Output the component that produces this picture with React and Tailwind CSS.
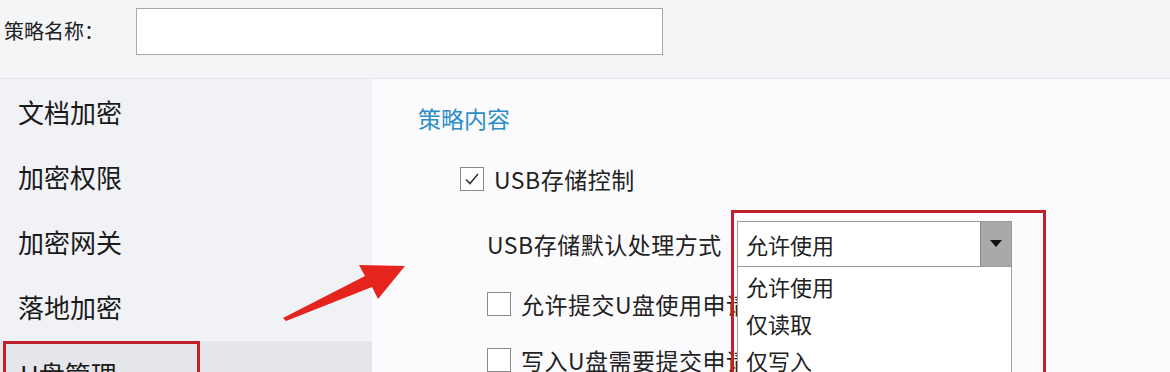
import React from 'react'

const font = { fontFamily: '"Noto Sans CJK SC", "Noto Sans", sans-serif' }

function CheckBox({ checked }) {
  return (
    <span className="w-[24px] h-[24px] border border-[#8a8a8a] bg-white flex items-center justify-center shrink-0">
      {checked && (
        <svg width="16" height="14" viewBox="0 0 16 14">
          <path d="M2 7.5 L6 11.5 L14 2" fill="none" stroke="#333" strokeWidth="1.6" />
        </svg>
      )}
    </span>
  )
}

function SideItem({ label, active }) {
  if (active) {
    return (
      <div className="h-[66px] shrink-0 mt-[2px] bg-[#e5e6e9]">
        <div className="w-[197px] h-full ml-[3px] border-[3px] border-[#c0202a] pl-[14px] pt-[12px]">
          <span className="text-[26px] text-[#1a1a1a] leading-[36px]">{label}</span>
        </div>
      </div>
    )
  }
  return (
    <div className="h-[65px] shrink-0 flex items-center pl-[18px]">
      <span className="text-[26px] text-[#1a1a1a]">{label}</span>
    </div>
  )
}

export default function App() {
  return (
    <main className="w-[1170px] h-[372px] overflow-hidden bg-[#fbfbfd] relative" style={font}>
      {/* barre du nom */}
      <div className="h-[79px] bg-[#f4f5f7] border-b border-[#e3e4e7] flex items-start pt-[8px]">
        <span className="w-[136px] h-[45px] pl-[4px] flex items-center text-[20px] text-[#222]">策略名称：</span>
        <div className="w-[527px] h-[47px] bg-white border border-[#a9a9a9]"></div>
      </div>

      <div className="flex h-[293px]">
        {/* menu gauche */}
        <div className="w-[372px] shrink-0 bg-[#f1f2f6] flex flex-col">
          <SideItem label="文档加密" />
          <SideItem label="加密权限" />
          <SideItem label="加密网关" />
          <SideItem label="落地加密" />
          <SideItem label="U盘管理" active />
        </div>

        {/* contenu */}
        <div className="flex-1 pl-[46px] pt-[22px] flex flex-col">
          <h2 className="text-[23px] text-[#2d8ec6] leading-[34px]">策略内容</h2>

          <div className="flex items-center gap-[10px] ml-[42px] mt-[29px] h-[30px] shrink-0">
            <CheckBox checked />
            <span className="text-[23px] tracking-[0.5px] text-[#222]">USB存储控制</span>
          </div>

          <div className="flex items-center ml-[69px] mt-[27px] h-[46px] shrink-0">
            <span className="text-[23px] tracking-[0.5px] text-[#222] w-[250px]">USB存储默认处理方式</span>
            <div className="relative w-[275px] h-[46px]">
              <div className="absolute top-[-11px] left-[-6px] w-[315px] h-[200px] border-[3px] border-[#c0202a] pl-[3px] pt-[8px] z-10">
                <div className="w-[275px] h-[46px] bg-white border border-[#9a9a9a] flex">
                  <span className="flex-1 flex items-center pl-[8px] text-[22px] text-[#222]">允许使用</span>
                  <span className="w-[31px] bg-[#a9a9a9] border-l border-[#8a8a8a] flex items-center justify-center">
                    <svg width="12" height="8" viewBox="0 0 12 8">
                      <path d="M0 0 H12 L6 7 Z" fill="#111" />
                    </svg>
                  </span>
                </div>
                <div className="w-[275px] h-[140px] bg-white border border-t-0 border-[#a0a0a0] pl-[8px] pt-[1px] flex flex-col">
                  <span className="h-[37px] text-[22px] text-[#222] leading-[37px]">允许使用</span>
                  <span className="h-[37px] text-[22px] text-[#222] leading-[37px]">仅读取</span>
                  <span className="h-[37px] text-[22px] text-[#222] leading-[37px]">仅写入</span>
                </div>
              </div>
            </div>
          </div>

          <div className="flex items-center gap-[10px] ml-[69px] mt-[22px] h-[30px] shrink-0">
            <CheckBox />
            <span className="text-[23px] tracking-[0.5px] text-[#222]">允许提交U盘使用申请</span>
          </div>

          <div className="flex items-center gap-[10px] ml-[69px] mt-[26px] h-[30px] shrink-0">
            <CheckBox />
            <span className="text-[23px] tracking-[0.5px] text-[#222]">写入U盘需要提交申请</span>
          </div>
        </div>
      </div>

      {/* flèche rouge */}
      <svg className="absolute left-[275px] top-[255px]" width="140" height="72" viewBox="0 0 140 72">
        <polygon points="8,63 90,21 84,10 130,11 103,44 97,32 11,66" fill="#e5241d" />
      </svg>
    </main>
  )
}
